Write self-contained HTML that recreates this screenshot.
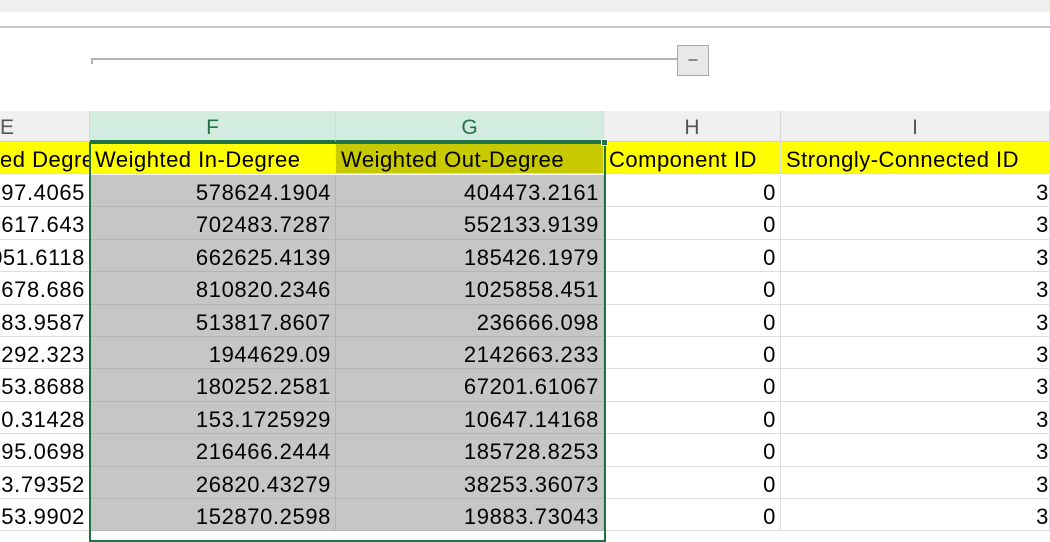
<!DOCTYPE html>
<html><head><meta charset="utf-8"><style>
*{margin:0;padding:0;box-sizing:border-box}
body{width:1050px;height:525px;overflow:hidden;background:#fff;position:relative;font-family:"Liberation Sans",sans-serif;}
.top{position:absolute;left:0;top:0;width:1050px;height:12px;background:#f1eeee}
.hl{position:absolute;left:0;top:26px;width:1050px;height:2px;background:#c8c8c8}
.sl{position:absolute;left:91px;top:58px;width:587px;height:2px;background:#b4b4b4}
.slt{position:absolute;left:91px;top:58px;width:2px;height:6px;background:#b4b4b4}
.btn{position:absolute;left:677px;top:45px;width:32px;height:31px;background:#e8e8e8;border:1px solid #a9a9a9;font-size:16px;text-align:center;line-height:28px;color:#333}
.ch{position:absolute;top:111px;height:31px;background:#efefef;color:#555;font-size:21px;text-align:center;line-height:34px;border-right:1px solid #d8d8d8;border-bottom:1px solid #d0d0d0}
.ch.s{background:#d3ece0;color:#217346;border-bottom:2px solid #217346}
.c{position:absolute;height:32.4px;font-size:22px;line-height:36px;color:#000;white-space:nowrap;overflow:hidden;border-right:1px solid #dcdcdc;border-bottom:1px solid #dcdcdc;padding:0 4px;text-align:right;letter-spacing:0.6px}
.y{background:#ffff00;text-align:left;padding-left:5px;letter-spacing:0.5px}
.g{background:#c6c6c6;border-color:#b4b4b4}
.sel{position:absolute;left:89px;top:142px;width:517px;height:400px;border:2px solid #217346}
.hnd{position:absolute;left:601px;top:139px;width:7px;height:7px;background:#217346;border:1px solid #fff}
</style></head><body>
<div class="top"></div><div class="hl"></div>
<div class="sl"></div><div class="slt"></div>
<div class="btn">–</div>
<div class="ch" style="left:0;width:90px;text-align:left;padding-left:0">E</div>
<div class="ch s" style="left:90px;width:246px">F</div>
<div class="ch s" style="left:336px;width:268px">G</div>
<div class="ch" style="left:604px;width:177px">H</div>
<div class="ch" style="left:781px;width:269px">I</div>
<div id="g"></div>
<script>
var E=["097.4065","4617.643","051.6118","5678.686","483.9587","7292.323","453.8688","00.31428","195.0698","73.79352","753.9902"];
var F=["578624.1904","702483.7287","662625.4139","810820.2346","513817.8607","1944629.09","180252.2581","153.1725929","216466.2444","26820.43279","152870.2598"];
var G=["404473.2161","552133.9139","185426.1979","1025858.451","236666.098","2142663.233","67201.61067","10647.14168","185728.8253","38253.36073","19883.73043"];
var h='';var cols=[[0,90],[90,246],[336,268],[604,177],[781,269]];
function cell(ci,top,txt,cls,st){var c=cols[ci];h+='<div class="c '+cls+'" style="left:'+c[0]+'px;width:'+c[1]+'px;top:'+top+'px;'+(st||'')+'">'+txt+'</div>';}
cell(0,142,'ed Degree','y','padding-left:0');
cell(1,142,'Weighted In-Degree','y');
cell(2,142,'Weighted Out-Degree','y','background:#c9c900');
cell(3,142,'Component ID','y');
cell(4,142,'Strongly-Connected ID','y');
for(var i=0;i<11;i++){var t=175+i*32.4;
cell(0,t,'<span style="position:absolute;right:4px">'+E[i]+'</span>','');cell(1,t,F[i],'g');cell(2,t,G[i],'g');cell(3,t,'0','');cell(4,t,'3','','padding-right:0');}
document.getElementById('g').innerHTML=h;
</script>
<div class="sel"></div><div class="hnd"></div>
</body></html>
